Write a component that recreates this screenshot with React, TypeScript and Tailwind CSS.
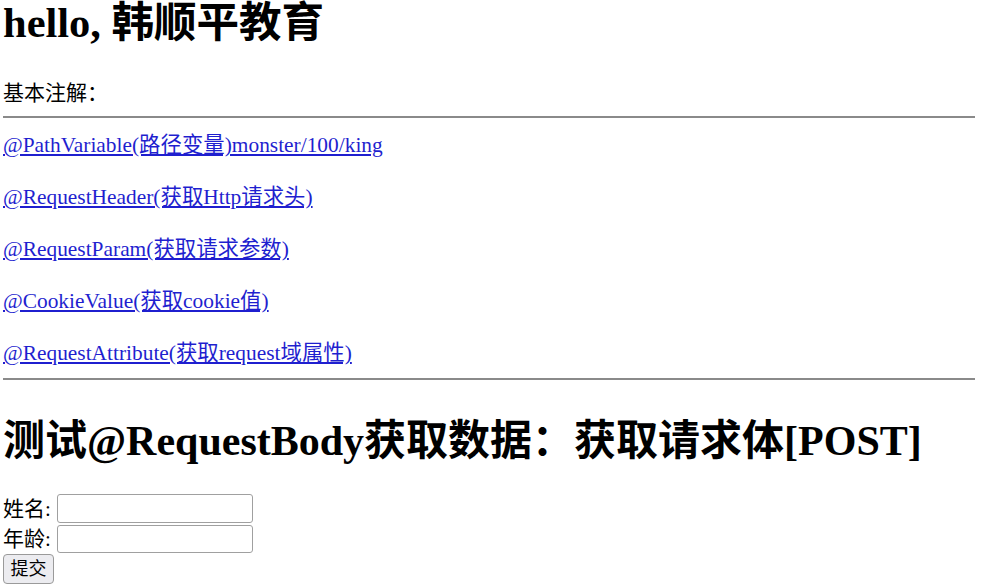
import React from "react";

const links = [
  "@PathVariable(路径变量)monster/100/king",
  "@RequestHeader(获取Http请求头)",
  "@RequestParam(获取请求参数)",
  "@CookieValue(获取cookie值)",
  "@RequestAttribute(获取request域属性)",
];

export default function App() {
  return (
    <div
      className="bg-white text-black pl-[3px] pr-[7px] w-[982px] h-[588px] overflow-hidden"
      style={{ fontFamily: '"Liberation Serif", "Noto Sans CJK SC", serif' }}
    >
      <h1 className="h-[46px] text-[42.5px] leading-[46px] font-bold whitespace-nowrap">
        hello, 韩顺平教育
      </h1>
      <div className="mt-[35px] h-[24px] text-[21px] leading-[24px]">基本注解：</div>
      <div className="mt-[11px] h-[2px] bg-[#8a8a8a]" />
      <div className="mt-[15px] flex flex-col gap-[28px]">
        {links.map((t) => (
          <div key={t} className="h-[24px] text-[21.4px] leading-[24px] whitespace-nowrap">
            <a href="#" className="text-[#1f1fcf] underline underline-offset-[2px]">
              {t}
            </a>
          </div>
        ))}
      </div>
      <div className="mt-[13px] h-[2px] bg-[#8a8a8a]" />
      <h2 className="mt-[37px] h-[48px] text-[42px] leading-[48px] font-bold whitespace-nowrap">
        测试@RequestBody获取数据：获取请求体[POST]
      </h2>
      <form className="flex flex-col" onSubmit={(e) => e.preventDefault()}>
        <div className="mt-[29px] flex items-center h-[29px]">
          <span className="w-[54px] text-[21px] leading-[24px]">姓名:</span>
          <input
            type="text"
            className="w-[196px] h-[29px] border border-[#a0a0a0] rounded-[3px] bg-white"
          />
        </div>
        <div className="mt-[2px] flex items-center h-[28px]">
          <span className="w-[54px] text-[21px] leading-[24px]">年龄:</span>
          <input
            type="text"
            className="w-[196px] h-[28px] border border-[#a0a0a0] rounded-[3px] bg-white"
          />
        </div>
        <div className="mt-[1px] flex">
          <button
            type="submit"
            className="w-[51px] h-[30px] text-[18px] leading-[20px] bg-[#ececf0] border border-[#9a9a9a] rounded-[4px] text-black"
          >
            提交
          </button>
        </div>
      </form>
    </div>
  );
}
